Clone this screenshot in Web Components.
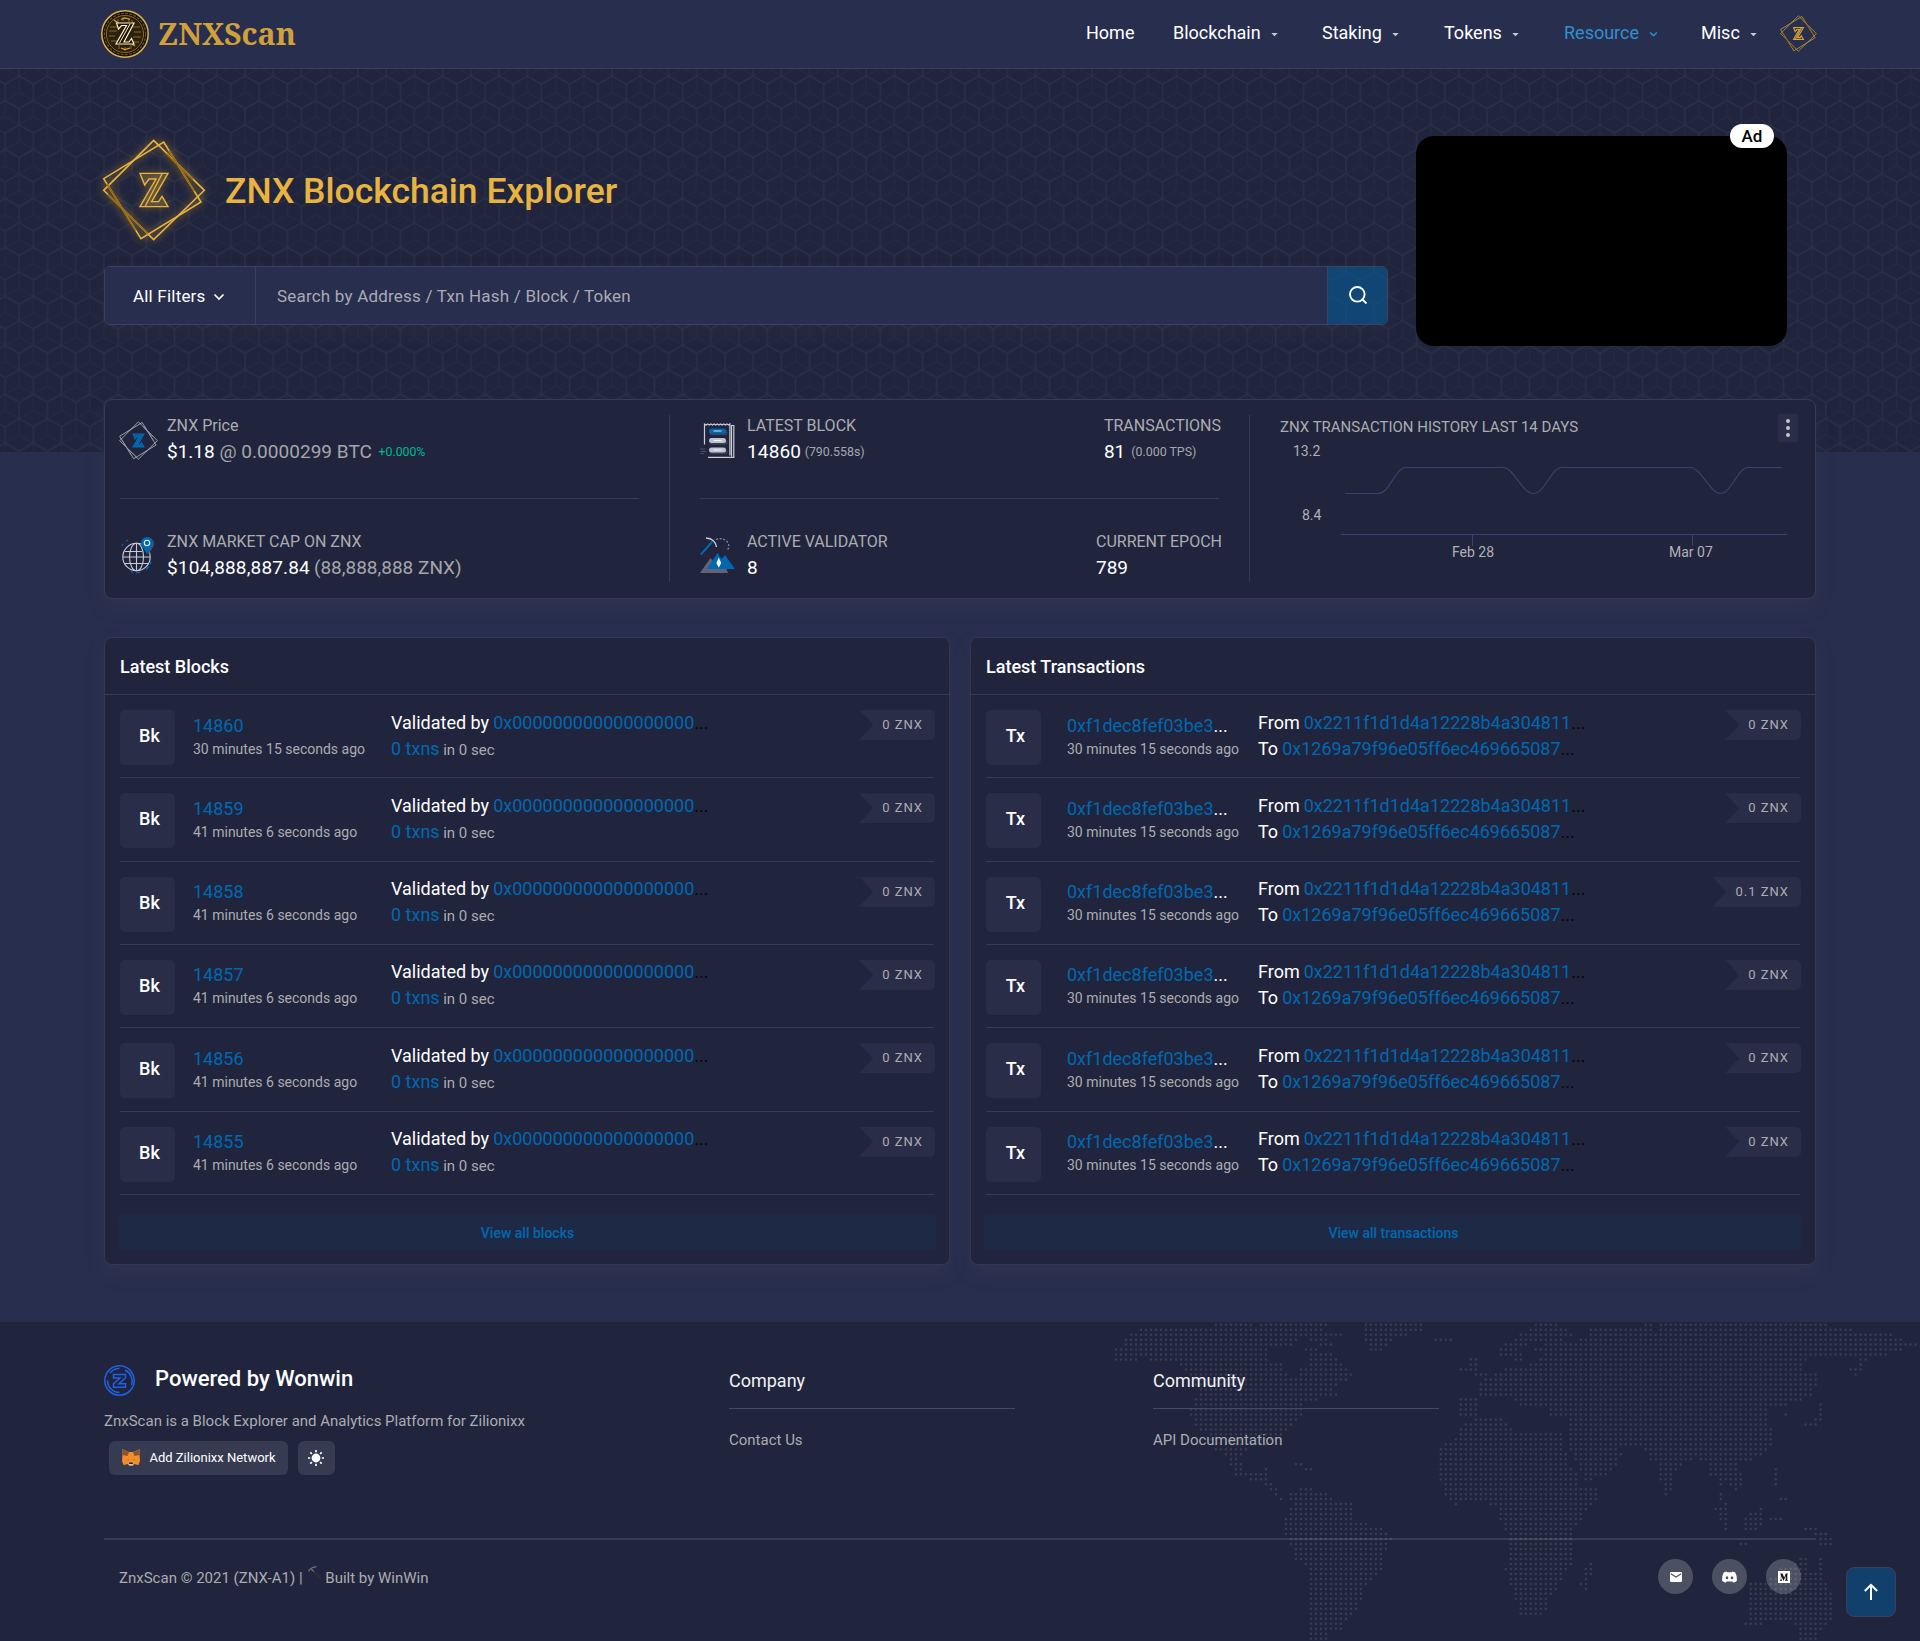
<!DOCTYPE html>
<html lang="en">
<head>
<meta charset="utf-8">
<title>ZNXScan - ZNX Blockchain Explorer</title>
<style>
  html, body { margin: 0; padding: 0; }
  body { background: #282e4e; font-family: Roboto, "Liberation Sans", sans-serif; color: #fff; }
</style>
</head>
<body>
<znx-app></znx-app>
<script>
const define = (name, html, after) => customElements.define(name, class extends HTMLElement {
  constructor() {
    super();
    const root = this.attachShadow({ mode: 'open' });
    const t = document.createElement('template');
    t.innerHTML = typeof html === 'function' ? html(this) : html;
    root.append(t.content.cloneNode(true));
    if (after) after(root, this);
  }
});
const attr = (el, n, d = '') => el.getAttribute(n) ?? d;

/* Double rotated square with the inline Z */
define('znx-mark', `
<style>
  :host { display: block; width: var(--size, 104px); height: var(--size, 104px); }
  svg { display: block; width: 100%; height: 100%; overflow: visible; filter: var(--glow, none); }
  .frame { stroke: var(--frame, #e8b33f); stroke-width: var(--w, 4.6); fill: none; }
  .shade { stroke: var(--shade, #9a6c10); stroke-width: var(--w, 4.6); fill: none; }
  .z { stroke: var(--z, #e8b33f); stroke-width: var(--zw, 4.2); fill: var(--zfill, rgba(232,179,63,.14)); }
</style>
<svg viewBox="35 415 312 312">
  <path class="frame" d="M190 422L342 572L190 720L40 572Z"/>
  <path class="frame" d="M220 427L332 607L152 717L40 537Z"/>
  <path class="shade" d="M228 462L308 540M236 453L312 575M52 584L172 702M50 553L136 692"/>
  <path class="z" d="M149 521H233L184 606H205L215 590L233 621H149L197 538H176L163 556Z"/>
  <path class="z" d="M215 523L165 619" fill="none"/>
</svg>`);

define('znx-coin', `
<style>:host{display:block;width:48px;height:48px}svg{display:block}</style>
<svg width="48" height="48" viewBox="0 0 48 48" fill="none">
  <circle cx="24" cy="24" r="23.2" fill="#14110d" stroke="#d9b04c" stroke-width="1.5"/>
  <circle cx="24" cy="24" r="20.6" stroke="#6d501a" stroke-width="1.2" stroke-dasharray="3 1.2"/>
  <circle cx="24" cy="24" r="18.6" fill="#2b2110" stroke="#b98a2b" stroke-width=".7"/>
  <path d="M9 17h7M8 21h8M8 26h6M10 31h7M32 17h7M33 22h7M32 27h8M31 32h7M17 9v4M22 7v4M28 8v4M31 10v3M18 35v4M24 37v4M30 35v4" stroke="#8c6820" stroke-width="1"/>
  <path d="M13 10l4 3M34 36l-3-2M20 38l4 1.6l5-1.6M20 9.500l4-1.500l5 1.500" stroke="#e2a531" stroke-width="1.300"/>
  <path d="M15.500 13H33L23 32H28L30.500 28.500L33 34H15L25.500 15.500H20.500L17.500 19Z" fill="#1b150b" stroke="#fff0c4" stroke-width="1.200"/>
  <path d="M29 14L18.500 33" stroke="#fff0c4"/>
</svg>`);

define('nav-item', el => `
<style>
  :host { display: flex; align-items: center; height: 24px; font-size: 18px; line-height: 24px; color: #fff; white-space: nowrap; }
  :host([active]) { color: #3190cf; }
  svg { margin: 3px 0 0 9.500px; }
</style>
<slot></slot>${el.hasAttribute('menu') ? (el.hasAttribute('active')
  ? '<svg width="9" height="7" viewBox="0 0 9 7"><path d="M1.200 1.500L4.500 4.800L7.800 1.500" fill="none" stroke="currentColor" stroke-width="1.500"/></svg>'
  : '<svg width="9" height="7" viewBox="0 0 9 7"><path d="M1.300 2H7.700L4.500 5.200Z" fill="#c9cbd4"/></svg>') : ''}`);

define('site-header', `
<style>
  :host { display: flex; justify-content: space-between; height: 68px; border-bottom: 1px solid #373c57; background: #282e4e; padding: 0 103px 0 101px; }
  .brand { display: flex; align-items: center; gap: 9px; }
  .brand span { font: 700 30.300px/40px "Noto Serif", "DejaVu Serif", serif; color: #d2a03a; }
  nav { display: grid; grid-template-columns: 87px 149px 122px 120px 137px 79px 37px; padding-top: 21px; box-sizing: border-box; }
  znx-mark { --size: 37px; --w: 7; --zw: 9; --frame: #c39437; --z: #d9a437; --shade: #8e6414; margin-top: -6px; }
</style>
<div class="brand"><znx-coin></znx-coin><span>ZNXScan</span></div>
<nav>
  <nav-item>Home</nav-item><nav-item menu>Blockchain</nav-item><nav-item menu>Staking</nav-item>
  <nav-item menu>Tokens</nav-item><nav-item menu active>Resource</nav-item><nav-item menu>Misc</nav-item>
  <znx-mark></znx-mark>
</nav>`);

define('search-bar', `
<style>
  :host { display: grid; grid-template-columns: 151px 1fr 60px; height: 59px; box-sizing: border-box; border: 1px solid #3c415f; border-radius: 6px; overflow: hidden; box-shadow: 0 8px 19px rgba(82,85,92,.12); font-size: 17px; letter-spacing: .2px; line-height: 24px; }
  .filter, .field { background: #282e4e; display: flex; align-items: center; }
  .filter { padding-left: 28px; border-right: 1px solid #3a3f5b; box-sizing: border-box; }
  .filter svg { margin: 3px 0 0 7.500px; }
  .field { padding-left: 21px; color: #a9abb4; }
  .go { background: rgba(6,88,150,.62); border-left: 1px solid #30466b; display: flex; align-items: center; justify-content: center; padding-bottom: 1px; }
</style>
<div class="filter">All Filters<svg width="12" height="10" viewBox="0 0 12 10"><path d="M1.500 2.500L6 7L10.500 2.500" fill="none" stroke="#fff" stroke-width="1.700"/></svg></div>
<div class="field">Search by Address / Txn Hash / Block / Token</div>
<div class="go"><svg width="20" height="20" viewBox="0 0 20 20" fill="none" stroke="#fff" stroke-width="1.900"><circle cx="9.300" cy="9.300" r="7.300"/><path d="M14.600 14.600L18.500 18.500"/></svg></div>`);

define('ad-box', `
<style>
  :host { display: block; position: relative; width: 371px; height: 210px; border-radius: 18px; background: #000; }
  span { position: absolute; right: 13px; top: -12px; width: 44px; height: 24px; border-radius: 12px; background: #fff; color: #000; font: 500 17px/25px Roboto, sans-serif; text-align: center; }
</style><span>Ad</span>`);

define('hero-section', `
<style>
  :host { display: grid; height: 383px; background: #20253d; }
  .hex, .content { grid-area: 1 / 1; min-width: 0; }
  .hex { display: block; }
  .content { z-index: 1; display: grid; grid-template-columns: 1284px 371px; gap: 28px; padding: 67px 0 0 104px; align-items: start; justify-content: start; }
  .title { display: flex; align-items: center; height: 104px; margin-left: -2.500px; padding-top: 2px; gap: 19.500px; }
  .title h1 { margin: 2px 0 0; font: 500 35.500px/48px Roboto, sans-serif; color: #e8b33f; white-space: nowrap; }
  znx-mark { --glow: drop-shadow(0 0 4px rgba(240,175,40,.65)); }
  search-bar { margin-top: 24px; }
</style>
<svg class="hex" width="1920" height="383" viewBox="0 69 1920 383">
  <defs><pattern id="h" x="103.900" y="76" width="28.230" height="48.950" patternUnits="userSpaceOnUse">
    <path d="M0 0V16.300L14.115 24.450M28.230 0V16.300L14.115 24.450M14.115 24.450V40.750L0 48.950M14.115 40.750L28.230 48.950" fill="none" stroke="#252a43" stroke-width="1"/>
    <path d="M0 0L14.115 8.150L28.230 0M14.115 8.150V24.450L0 32.600V48.950M14.115 24.450L28.230 32.600V48.950" fill="none" stroke="#2a2f48" stroke-width="1.500"/>
  </pattern></defs>
  <rect y="69" width="1920" height="383" fill="url(#h)"/>
</svg>
<div class="content">
  <div><div class="title"><znx-mark></znx-mark><h1>ZNX Blockchain Explorer</h1></div><search-bar></search-bar></div>
  <ad-box></ad-box>
</div>`);

const statIcons = {
  globe: `<svg width="39" height="39" viewBox="-2 0 39 39" fill="none" stroke="#c9ccd6" stroke-width="1.100">
    <circle cx="14.500" cy="20" r="13.700"/><ellipse cx="14.500" cy="20" rx="7" ry="13.700"/><path d="M14.500 6.500V33.500M2.500 14.500H20M1 20H28M2.500 26.500H27" />
    <path d="M4 4l2-1M0 9l1-2M9 34.500l2 1M14 35.500h4M24 32.500l3-3M28 27.500l1-3" stroke="#0068b1" stroke-width="1.300"/>
    <path d="M27 17.500C25 12.500 20 10.500 20 6.500A6 6 0 0 1 32 6.500C32 10.500 28.500 12.500 27 17.500Z" fill="#4a5068" stroke="none"/>
    <path d="M25 17.500C23.500 12.500 19 10.500 19 6A6 6 0 0 1 31 6C31 10.500 26.500 12.500 25 17.500Z" fill="#0068b1" stroke="none"/>
    <circle cx="25" cy="6" r="2.700" stroke="#e8ecf4"/></svg>`,
  block: `<svg width="35" height="39" viewBox="0 -1.500 35 39" fill="none" stroke="#c9ccd6" stroke-width="1.200">
    <path d="M4.500 22V1.500l1.600 1l1.600-1l1.600 1l1.600-1l1.600 1l1.600-1l1.600 1l1.600-1l1.600 1l1.600-1l1.600 1l1.600-1l1.600 1l1.600-1l1.600 1l1.400-1V33M8 34.800H33.800V3H31.500V34"/>
    <path d="M0 26.500H5M1 29H6M0 31H4" stroke="#4a4f68"/>
    <path d="M12 10.200H25M12 19.700H25M12 29.200H25" stroke="#3b4058" stroke-width="5" stroke-linecap="round"/>
    <path d="M11.500 8.500H23.500" stroke="#0068b1" stroke-width="5" stroke-linecap="round"/>
    <path d="M11.500 18H23.500M11.500 27.500H23.500" stroke="#bfc3cf" stroke-width="5" stroke-linecap="round"/>
    <path d="M13.500 8.500H21.500M13.500 18H21.500M13.500 27.500H21.500" stroke="#fff" stroke-opacity=".8" stroke-width="1.100"/></svg>`,
  mine: `<svg width="35" height="39" viewBox="0 0 35 39" fill="none">
    <path d="M0 36L10.500 21L16 28H25L28 36Z" fill="#5f6478"/>
    <path d="M7 32L17.500 16L21.500 22L25 18L35 32Z" fill="#0068b1"/>
    <path d="M18.800 20.500L21.200 26L18.800 30.500L16.400 26Z" fill="#fff"/>
    <path d="M.8 17.500L12.500 4.500" stroke="#0068b1" stroke-width="1.900"/>
    <path d="M6 1Q15 1.500 16.500 10" stroke="#c9ccd6" stroke-width="1.300"/>
    <path d="M16 2.500Q21 .2 26 3.500Q31 8 27 14" stroke="#8b90a2" stroke-width="1.200" stroke-dasharray="2 1.700"/></svg>`
};

define('stat-item', el => {
  const icon = attr(el, 'icon');
  return `
<style>
  :host { display: flex; }
  .icon { width: 47px; padding-top: ${icon === 'znx' || icon === 'block' ? 8 : 7.5}px; flex: none; }
  znx-mark { --size: 39px; --frame: #bfc3cf; --shade: #9196a8; --w: 6; --z: #0068b1; --zw: 11; --zfill: #24507d; margin-left: -1px; }
  .label { font-size: 16px; line-height: 26px; color: #acacb0; white-space: nowrap; }
  .value { font-size: 19px; line-height: 26px; color: #fff; white-space: nowrap; display: flex; align-items: baseline; }
</style>
${icon ? `<div class="icon">${icon === 'znx' ? '<znx-mark></znx-mark>' : statIcons[icon]}</div>` : ''}
<div><div class="label">${attr(el, 'label')}</div><div class="value"><slot></slot></div></div>`;
});

define('history-chart', `
<style>
  :host { display: block; width: 540px; }
  .top { display: flex; justify-content: space-between; height: 28px; }
  .top span { font-size: 15px; line-height: 24px; color: #acacb0; padding-top: 1px; }
  .menu { width: 20px; height: 28px; border-radius: 3px; background: #2a2d47; display: flex; flex-direction: column; align-items: center; justify-content: center; gap: 3px; margin-right: 22px; }
  .menu i { width: 4px; height: 4px; border-radius: 50%; background: #c3c3c8; }
  svg { display: block; }
  text { font: 14px Roboto, sans-serif; fill: #b1b1b4; }
</style>
<div class="top"><span>ZNX TRANSACTION HISTORY LAST 14 DAYS</span><div class="menu"><i></i><i></i><i></i></div></div>
<svg width="530" height="125" viewBox="1280 442 530 125" fill="none">
  <path d="M1345 493.500H1378C1390 493.500 1395 467.500 1406 467.500H1503C1514 467.500 1522 493.500 1533.500 493.500S1551 467.500 1562 467.500H1690C1701 467.500 1710 493.500 1720.500 493.500S1738 467.500 1748 467.500H1782" stroke="#36436a" stroke-width="1.200"/>
  <path d="M1341 534.500H1787M1472.500 534.500V546M1692.500 534.500V546" stroke="#3a4270"/>
  <text x="1293" y="456">13.2</text><text x="1302" y="520">8.4</text>
  <text x="1452" y="557">Feb 28</text><text x="1669" y="557">Mar 07</text>
</svg>`);

define('stats-card', `
<style>
  :host { display: grid; grid-template-columns: 565px 580px 1fr; height: 200px; box-sizing: border-box; border: 1px solid #373c55; border-radius: 8px; background: #20253d; box-shadow: 0 8px 19px rgba(82,85,92,.15); margin: -53px 104px 0; position: relative; }
  section { margin: 15px 0 16px; }
  .col { border-right: 1px solid #333853; padding-left: 15px; display: flex; flex-direction: column; }
  .col.b { padding-left: 30px; }
  .pair { display: flex; justify-content: space-between; width: 521px; height: 82px; margin-top: -2px; }
  .pair.last { height: 53px; width: 522px; margin-top: 30px; }
  hr { border: 0; height: 1px; width: 519px; background: #373c55; margin: 3px 0 0; flex: none; }
  .dim { color: #a6a6aa; } .sm { font-size: 12.400px; position: relative; top: -2px; }
  .up { color: #00b894; font-size: 12.300px; margin-left: 6.500px; position: relative; top: -2px; }
  .chart { padding-left: 30px; margin-top: 14px; }
</style>
<section class="col">
  <div class="pair"><stat-item icon="znx" label="ZNX Price">$1.18&nbsp;<span class="dim" style="letter-spacing:.04px">@ 0.0000299 BTC</span><span class="up">+0.000%</span></stat-item></div>
  <hr>
  <div class="pair last"><stat-item icon="globe" label="ZNX MARKET CAP ON ZNX"><span style="letter-spacing:.15px">$104,888,887.84</span><span class="dim" style="margin-left:4px">(88,888,888 ZNX)</span></stat-item></div>
</section>
<section class="col b">
  <div class="pair"><stat-item icon="block" label="LATEST BLOCK"><span style="letter-spacing:.15px">14860</span><span class="dim sm" style="margin-left:3.500px">(790.558s)</span></stat-item><stat-item label="TRANSACTIONS">81<span class="dim sm" style="margin-left:6px">(0.000 TPS)</span></stat-item></div>
  <hr>
  <div class="pair last"><stat-item icon="mine" label="ACTIVE VALIDATOR">8</stat-item><stat-item label="CURRENT EPOCH">789</stat-item></div>
</section>
<section class="chart"><history-chart></history-chart></section>`);

define('list-row', el => {
  const tx = attr(el, 'kind') === 'Tx';
  return `
<style>
  :host { display: grid; grid-template-columns: ${tx ? '81px 191px' : '73px 198px'} 1fr auto; height: 83.330px; box-sizing: border-box; border-bottom: 1px solid #373c55; padding-top: 15px; align-items: start; white-space: nowrap; font-size: 18px; }
  .box { width: 55px; height: 55px; border-radius: 5px; background: #2a2d48; font-weight: 500; line-height: 51px; text-align: center; text-indent: 4px; }
  a { color: #0068b1; }
  .id { line-height: 24px; padding-top: 3.500px; }
  .time { font-size: 14px; line-height: 20px; color: #acacb0; padding-top: 1px; }
  .lines { margin-top: -.5px; }
  .line { line-height: 26px; } .line a { margin-left: 4px; }
  .line i { color: #060709; font-style: normal; }
  .plain { margin-left: 0 !important; }
  .sec { font-size: 15px; color: #acacb0; margin-left: 3.500px; }
  .amt { height: 30px; margin-right: -1px; padding: 0 12px 0 23px; background: #2a2d48; border-radius: 0 5px 5px 0; clip-path: polygon(0 0, 100% 0, 100% 100%, 0 100%, 14px 50%); font-size: 13px; line-height: 29px; letter-spacing: 1px; color: #acacb0; }
</style>
<div class="box">${attr(el, 'kind')}</div>
<div><div class="id"><a>${attr(el, 'ref')}</a>${tx ? '...' : ''}</div><div class="time">${attr(el, 'age')}</div></div>
<div class="lines">${tx
  ? '<div class="line">From<a>0x2211f1d1d4a12228b4a304811</a><i>...</i></div><div class="line">To<a>0x1269a79f96e05ff6ec469665087</a><i>...</i></div>'
  : '<div class="line">Validated by<a>0x000000000000000000</a><i>...</i></div><div class="line"><a class="plain">0 txns</a><span class="sec">in 0 sec</span></div>'}</div>
<div class="amt">${attr(el, 'amount')}</div>`;
});

define('list-panel', el => `
<style>
  :host { display: flex; flex-direction: column; height: 628px; box-sizing: border-box; border: 1px solid #343953; border-radius: 8px; background: #20253d; box-shadow: 0 8px 19px rgba(82,85,92,.15); }
  h2 { margin: 0; height: 57px; box-sizing: border-box; border-bottom: 1px solid #373c55; padding: 16.500px 15px 0; font: 500 18px/24px Roboto, sans-serif; }
  .rows { padding: 0 15px; display: flex; flex-direction: column; }
  .all { margin: 20px 13px 0; height: 36px; border-radius: 4px; background: #1e2a45; color: #0068b1; font: 500 14px/36px Roboto, sans-serif; text-align: center; text-indent: 1px; }
</style>
<h2>${attr(el, 'heading')}</h2>
<div class="rows"><slot></slot></div>
<div class="all">${attr(el, 'more')}</div>`);

/* Dotted world map: outlines sampled on a 5px lattice */
const west = [
 '245,38 325,38 330,50 345,38 460,38 465,50 450,66 490,68 490,78 450,85 475,95 475,106 450,106 415,80 395,95 395,108 350,112 350,155 375,160 385,190 400,200 410,190 410,175 425,165 420,110 445,118 480,135 490,160 510,185 510,205 490,215 470,230 485,255 440,270 415,285 415,310 410,335 385,360 380,390 385,405 350,400 345,412 305,420 300,450 310,485 330,490 345,470 350,485 345,500 360,520 378,565 372,570 350,530 325,512 290,495 275,460 270,425 245,418 235,370 215,345 205,315 205,295 215,270 215,255 225,245 205,200 195,175 165,150 110,148 90,165 66,155 66,115 85,100 85,80 115,55 195,55 245,45',
 '533,38 645,38 640,62 610,75 575,95 570,122 543,122 533,100',
 '662,82 694,82 694,94 662,94',
 '398,456 410,456 434,470 434,481 420,481 398,466',
 '412,534 432,534 432,542 412,542',
 '395,545 460,545 470,565 508,582 508,630 570,655 582,690 575,710 565,740 565,770 550,800 535,830 525,870 508,918 490,935 490,955 465,965 462,992 430,992 430,810 425,775 400,745 390,700 382,670 383,620 395,590 390,560'];
const east = [
 '75,312 120,297 190,297 200,325 230,335 265,340 300,342 370,345 380,415 385,440 410,470 420,500 482,508 482,525 465,560 430,595 400,630 395,655 395,740 365,765 360,800 335,830 318,875 300,892 238,892 222,830 207,785 195,745 210,720 207,650 180,615 178,570 150,560 150,545 100,548 45,560 15,530 12,500 -4,495 -4,400 15,380 50,350',
 '462,718 468,725 455,765 438,818 420,810 420,795 432,780 435,745 450,735',
 '58,238 112,238 112,290 58,294',
 '120,190 150,180 165,165 190,165 200,140 235,150 262,150 268,130 300,125 310,112 285,98 285,85 335,75 355,60 410,75 420,55 450,60 448,32 540,35 612,30 612,12 635,12 640,50 657,40 657,12 1020,12 1160,12 1165,28 1230,30 1235,42 1365,45 1370,60 1430,75 1430,85 1370,98 1330,115 1220,112 1115,115 1085,145 1095,165 1145,170 1140,185 1130,205 1110,240 1060,250 1030,275 1050,285 1050,305 1020,270 975,275 990,295 990,330 1005,345 990,400 930,430 890,430 905,465 915,500 885,530 865,490 845,495 840,525 862,555 862,590 872,625 872,655 850,630 835,590 820,572 845,570 835,520 838,475 805,470 805,430 765,420 720,440 695,480 695,522 675,530 670,500 655,470 655,430 625,425 610,385 530,385 548,410 530,440 490,475 430,490 420,450 385,390 385,320 385,292 330,290 320,265 280,260 240,262 210,235 120,235',
 '238,50 300,12 350,12 355,28 410,42 400,58 330,70 310,80 290,70 240,95 245,125 225,130 225,112 178,112 178,92 195,72 225,65',
 '90,122 108,122 112,150 138,162 138,172 105,172 85,145 75,160 58,170 58,150 85,150',
 '1148,240 1158,250 1145,300 1130,322 1080,325 1065,335 1090,312 1130,300 1135,270',
 '1255,108 1278,120 1272,145 1250,188 1230,155 1250,140',
 '955,568 975,575 965,600 960,635 915,635 910,600',
 '895,672 932,672 932,682 895,682',
 '1090,632 1130,630 1165,650 1188,692 1165,690 1130,690 1130,660',
 '998,448 1010,448 1010,500 998,500', '1012,536 1038,536 1038,548 1012,548', '985,600 1022,600 1022,608 985,608',
 '925,795 980,790 1010,770 1020,740 1060,740 1075,715 1100,715 1100,750 1130,765 1132,715 1147,715 1150,780 1170,810 1185,850 1175,905 1145,930 1140,950 1128,970 1075,970 1075,925 1050,915 1030,900 960,920 912,920 925,895 920,855'];
const toPoly = (list, ox, oy, sx, sy) => list.map(s => s.split(' ').map(p => { const [x, y] = p.split(',').map(Number); return [ox + x / sx, oy + y / sy]; }));
const lands = [...toPoly(west, 1080, 1310, 1.8667, 3), ...toPoly(east, 1440, 1318, 3, 3)];
const inside = (poly, x, y) => {
  let hit = false;
  for (let i = 0, j = poly.length - 1; i < poly.length; j = i++) {
    const [xi, yi] = poly[i], [xj, yj] = poly[j];
    if ((yi > y) !== (yj > y) && x < (xj - xi) * (y - yi) / (yj - yi) + xi) hit = !hit;
  }
  return hit;
};
define('world-map', '<style>:host{display:block}svg{display:block}</style><svg width="1920" height="319" viewBox="0 1322 1920 319"><path fill="none" stroke="#393d54" stroke-width="2.500" stroke-linecap="round"/></svg>', root => {
  let d = '';
  for (let r = 0; r < 64; r++) for (let c = 0; c < 170; c++) {
    const y = 1324.7 + r * 4.984, x = 1091 + c * 4.9975;
    if (lands.some(p => inside(p, x, y))) d += `M${x.toFixed(1)} ${y.toFixed(1)}h.01`;
  }
  root.querySelector('path').setAttribute('d', d);
});

define('footer-links', el => `
<style>
  :host { display: block; }
  h3 { margin: 0; font: 400 18px/24px Roboto, sans-serif; color: #f1f1f3; padding-bottom: 15.500px; width: 285.500px; border-bottom: 1px solid #474b61; }
  div { margin-top: 18.500px; font-size: 15px; line-height: 24px; color: #acacb0; }
</style><h3>${attr(el, 'heading')}</h3><div><slot></slot></div>`);

define('social-button', `
<style>:host{display:flex;align-items:center;justify-content:center;width:35px;height:35px;border-radius:50%;background:rgba(255,255,255,.2)}</style><slot></slot>`);

define('site-footer', `
<style>
  :host { display: grid; height: 319px; background: #20253d; overflow: hidden; }
  world-map, .content { grid-area: 1 / 1; min-width: 0; }
  .content { z-index: 1; display: flex; flex-direction: column; padding: 43px 104px 0; }
  .cols { display: grid; grid-template-columns: 625px 424px 1fr; height: 173px; }
  .brand { display: flex; align-items: center; gap: 20px; height: 31px; font: 500 22px/32px Roboto, sans-serif; }
  .brand span { padding-bottom: 3px; }
  .about { font-size: 15px; line-height: 24px; color: #acacb0; margin-top: 13px; }
  .btns { display: flex; gap: 10px; margin: 8px 0 0 5px; }
  .btn { height: 34px; border-radius: 6px; background: #373b51; display: flex; align-items: center; justify-content: center; font-size: 13px; box-sizing: border-box; }
  .add { width: 179px; gap: 9px; padding-left: 1px; padding-bottom: 1px; } .sun { width: 37px; padding-right: 1px; }
  footer-links { margin-top: 3.500px; }
  hr { border: 0; margin: 0; height: 2px; background: rgba(255,255,255,.11); flex: none; width: 1712px; }
  .bottom { display: flex; justify-content: space-between; padding: 19px 15px 0; }
  .copy { font-size: 15px; line-height: 24px; color: #acacb0; padding-top: 6.500px; display: flex; }
  .copy svg { margin: 0 0 0 5px; }
  .social { display: flex; gap: 19px; }
  svg { display: block; }
</style>
<world-map></world-map>
<div class="content">
  <div class="cols">
    <div>
      <div class="brand"><svg width="31" height="31" viewBox="0 0 31 31" fill="none" stroke="#1f62e6" stroke-width="1.500"><circle cx="15.500" cy="15.500" r="14.700"/><path d="M15.500 3.500A12 12 0 0 0 6 8M3.500 15.500A12 12 0 0 0 15.500 27.500M27.500 20A12 12 0 0 0 21 5"/><path d="M9.500 9.500H21.500V13L15 18.800H21.500V22.300H9.500V18.800L16 13H9.500Z"/></svg><span>Powered by Wonwin</span></div>
      <div class="about">ZnxScan is a Block Explorer and Analytics Platform for Zilionixx</div>
      <div class="btns">
        <div class="btn add"><svg width="18" height="17" viewBox="0 0 18 17"><path d="M0 0L7 3H11L18 0L17.500 6L18 12L16.500 16L12 15L11 16.500H7L6 15L1.500 16L0 12L.5 6Z" fill="#f08f2d"/><path d="M0 0L7 3L5.500 7L.5 6ZM18 0L11 3L12.500 7L17.500 6Z" fill="#8a552c"/><path d="M4 10L7.500 10.500L6.500 12ZM14 10L10.500 10.500L11.500 12Z" fill="#d87020"/><path d="M6.500 14H11.500L11 16.500H7Z" fill="#d5c6b8"/><path d="M7.500 13.500H10.500L11 15H7Z" fill="#22201f"/></svg><span>Add Zilionixx Network</span></div>
        <div class="btn sun"><svg width="16" height="16" viewBox="0 0 16 16"><circle cx="8" cy="8" r="4.400" fill="#fff"/><path d="M8 0V2.200M8 13.800V16M0 8H2.200M13.800 8H16M2.300 2.300L3.900 3.900M12.100 12.100L13.700 13.700M2.300 13.700L3.900 12.100M12.100 3.900L13.700 2.300" stroke="#fff" stroke-width="1.700"/></svg></div>
      </div>
    </div>
    <footer-links heading="Company">Contact Us</footer-links>
    <footer-links heading="Community">API Documentation</footer-links>
  </div>
  <hr>
  <div class="bottom">
    <div class="copy"><span>ZnxScan © 2021 (ZNX-A1) |</span><svg width="14" height="15" viewBox="0 0 14 15" fill="none"><path d="M3 3L13.500 13" stroke="#2f3030" stroke-width="1.600"/><path d="M.6 5.500Q1.500 1.800 8.500 .7M2.500 2.500L6 5.500" stroke="#70737b" stroke-width="1.200"/></svg><span>&nbsp;Built by WinWin</span></div>
    <div class="social">
      <social-button><svg width="12" height="10" viewBox="0 0 12 10"><rect width="12" height="10" rx="1" fill="#fff"/><path d="M.8 1.800L6 5L11.200 1.800" fill="none" stroke="#4c5064" stroke-width="1.100"/></svg></social-button>
      <social-button><svg width="15" height="12" viewBox="0 0 15 12"><path d="M4.700 .4L5.300 1.200H9.700L10.300 .4Q12.200 .7 13.300 1.500Q15.200 5 14.800 10Q13.300 11.400 11.300 11.700L10.500 10.400H4.500L3.700 11.700Q1.700 11.400 .2 10Q-.2 5 1.700 1.500Q2.800 .7 4.700 .4Z" fill="#fff"/><ellipse cx="5" cy="6.800" rx="1.300" ry="1.500" fill="#4c5064"/><ellipse cx="10" cy="6.800" rx="1.300" ry="1.500" fill="#4c5064"/></svg></social-button>
      <social-button><svg width="12" height="12" viewBox="0 0 12 12"><rect width="12" height="12" fill="#fff"/><path d="M2.300 2.500H4.500L6.200 6.600L7.800 2.500H10V3L9.300 3.600V8.700L10 9.300V9.700H7V9.300L7.700 8.700V4.700L5.700 9.700H5.400L3.300 5V8.300L4.100 9.300V9.700H2V9.300L2.800 8.300V3.500L2.300 2.900Z" fill="#15161c"/></svg></social-button>
    </div>
  </div>
</div>`);

define('scroll-top', `
<style>:host{position:absolute;right:24px;bottom:24px;width:50px;height:50px;box-sizing:border-box;border-radius:8px;border:1px solid #383f60;background:#12406c;display:flex;align-items:center;justify-content:center;z-index:2}</style>
<svg width="16" height="18" viewBox="0 0 16 18" fill="none" stroke="#fff" stroke-width="2"><path d="M8 17V2M1.800 8L8 1.800L14.200 8"/></svg>`);

const blocks = ['14860', '14859', '14858', '14857', '14856', '14855'];
define('znx-app', `
<style>
  :host { display: block; position: relative; width: 1920px; height: 1641px; overflow: hidden; }
  .panels { display: grid; grid-template-columns: 846px 846px; gap: 20px; padding: 38px 0 57px 104px; }
</style>
<site-header></site-header>
<hero-section></hero-section>
<stats-card></stats-card>
<div class="panels">
  <list-panel heading="Latest Blocks" more="View all blocks">${blocks.map((b, i) => `<list-row kind="Bk" ref="${b}" age="${i ? '41 minutes 6 seconds ago' : '30 minutes 15 seconds ago'}" amount="0 ZNX"></list-row>`).join('')}</list-panel>
  <list-panel heading="Latest Transactions" more="View all transactions">${blocks.map((b, i) => `<list-row kind="Tx" ref="0xf1dec8fef03be3" age="30 minutes 15 seconds ago" amount="${i === 2 ? '0.1' : '0'} ZNX"></list-row>`).join('')}</list-panel>
</div>
<site-footer></site-footer>
<scroll-top></scroll-top>`);
</script>
</body>
</html>
